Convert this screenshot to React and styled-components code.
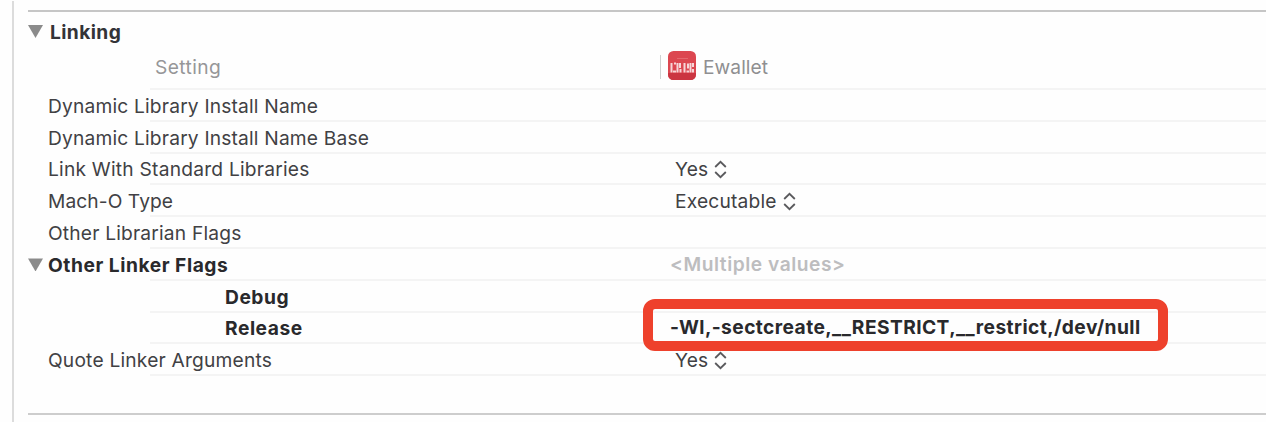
import React from "react";
import styled, { createGlobalStyle } from "styled-components";

const GlobalStyle = createGlobalStyle`
  * { box-sizing: border-box; }
  body {
    margin: 0;
    background: #fefefe;
    font-family: Inter, "Liberation Sans", sans-serif;
    font-size: 19.2px;
    overflow: hidden;
  }
`;

const Page = styled.main`
  height: 422px;
  padding: 1px 0 0 12px;
  overflow: hidden;
`;

const Panel = styled.div`
  height: 421px;
  border-left: 2px solid #dcdcdc;
  padding: 9px 0 0 14px;
`;

const Section = styled.section`
  height: 405px;
  border-top: 2px solid #c6c6c6;
  border-bottom: 2px solid #cdcdcd;
`;

const SectionHeader = styled.header`
  height: 39px;
  display: flex;
  align-items: center;
`;

const Line = styled.div`
  display: grid;
  grid-template-columns: 632px 1fr;
  align-items: center;
  height: ${(p) => p.$height || 31.8}px;
  padding-bottom: ${(p) => p.$lift || 0}px;
  background: linear-gradient(#f4f4f4, #f4f4f4) 122px 100% / 100% 2px no-repeat;
`;

const NameCell = styled.div`
  display: flex;
  align-items: center;
  padding-left: ${(p) => p.$indent}px;
`;

const ValueCell = styled.div`
  position: relative;
  display: flex;
  align-items: center;
  padding-left: ${(p) => p.$indent}px;
  padding-bottom: ${(p) => p.$lift || 0}px;
`;

const Text = styled.span`
  line-height: 24px;
  white-space: nowrap;
  color: ${(p) => p.$color || "#414144"};
  font-weight: ${(p) => p.$weight || 400};
  letter-spacing: ${(p) => p.$track ?? 0.18}px;
`;

const Disclosure = styled.span`
  flex: none;
  width: 15px;
  height: 13px;
  margin-right: ${(p) => p.$gap}px;
  background: #8b8b8b;
  clip-path: polygon(0 0, 100% 0, 50% 100%);
`;

const ColumnDivider = styled.span`
  width: 1px;
  height: 24px;
  background: #cfd1d1;
`;

const AppIcon = styled.svg`
  margin: 0 7px 3px 7px;
`;

const StepperIcon = styled.svg`
  margin-left: 6px;
`;

const Highlight = styled.div`
  position: absolute;
  left: -17px;
  top: -16px;
  width: 525px;
  height: 52px;
  border: 10px solid #ee412c;
  border-radius: 12px;
`;

function Stepper() {
  return (
    <StepperIcon width="13" height="20" viewBox="0 0 13 20" fill="none" stroke="#5a5a5d" strokeWidth="1.8">
      <path d="M1.2 8 6.5 2.8l5.3 5.2M1.2 13l5.3 5.2 5.3-5.2" />
    </StepperIcon>
  );
}

function EwalletIcon() {
  return (
    <AppIcon width="28" height="29" viewBox="0 0 28 29">
      <rect width="28" height="29" rx="5.5" fill="#dc4750" />
      <path d="M0 22h28v1.5a5.5 5.5 0 0 1-5.5 5.5h-17A5.5 5.5 0 0 1 0 23.5z" fill="#cb3541" />
      <path d="M9 7.5h11" stroke="#e4686e" />
      <path
        d="M3.5 12v9.500M6 12.500h2M5 20.500h3M9.500 12v9.500M12 12v5M12.500 18v3.500M16.500 12v9.500M18.500 20.500h2.500M20 12.500v5M22.500 12v9.500M25 12v4M25 18v3.500"
        stroke="#f6d6d8"
        strokeWidth="2"
        fill="none"
      />
    </AppIcon>
  );
}

const settings = [
  { name: "Dynamic Library Install Name" },
  { name: "Dynamic Library Install Name Base" },
  { name: "Link With Standard Libraries", track: 0.22, value: "Yes" },
  { name: "Mach-O Type", track: 0.08, value: "Executable" },
  { name: "Other Librarian Flags" },
  { name: "Other Linker Flags", kind: "group", multiple: "<Multiple values>" },
  { name: "Debug", kind: "config" },
  { name: "Release", kind: "config", flags: "-Wl,-sectcreate,__RESTRICT,__restrict,/dev/null" },
  { name: "Quote Linker Arguments", track: 0.2, value: "Yes" },
];

function SettingRow({ name, kind, track, value, multiple, flags }) {
  const indent = kind === "group" ? 0 : kind === "config" ? 197 : 20;
  return (
    <Line>
      <NameCell $indent={indent}>
        {kind === "group" && <Disclosure $gap={5} />}
        <Text
          $weight={kind ? 700 : 400}
          $color={kind ? "#29292c" : undefined}
          $track={kind ? 0.54 : track}
        >
          {name}
        </Text>
      </NameCell>
      <ValueCell $indent={value ? 15 : 10} $lift={multiple || flags ? 2 : 0}>
        {value && (
          <>
            <Text>{value}</Text>
            <Stepper />
          </>
        )}
        {multiple && <Text $weight={600} $color="#bdbdbf" $track={0.54}>{multiple}</Text>}
        {flags && (
          <>
            <Text $weight={700} $color="#29292c" $track={0.42}>{flags}</Text>
            <Highlight />
          </>
        )}
      </ValueCell>
    </Line>
  );
}

export default function App() {
  return (
    <Page>
      <GlobalStyle />
      <Panel>
        <Section>
          <SectionHeader>
            <Disclosure $gap={7} />
            <Text $weight={700} $color="#333337" $track={0.4}>Linking</Text>
          </SectionHeader>
          <Line $height={39} $lift={7}>
            <NameCell $indent={127}>
              <Text $color="#969698" $track={0.4}>Setting</Text>
            </NameCell>
            <ValueCell $indent={0}>
              <ColumnDivider />
              <EwalletIcon />
              <Text $color="#8f8f91" $track={0.05}>Ewallet</Text>
            </ValueCell>
          </Line>
          {settings.map((item) => (
            <SettingRow key={item.name} {...item} />
          ))}
        </Section>
      </Panel>
    </Page>
  );
}
